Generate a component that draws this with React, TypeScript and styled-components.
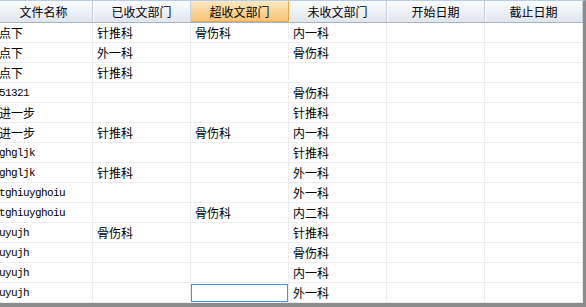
import { FC } from 'react';
import styled, { createGlobalStyle } from 'styled-components';

const columns = ['文件名称', '已收文部门', '超收文部门', '未收文部门', '开始日期', '截止日期'];

const rows: string[][] = [
  ['点下', '针推科', '骨伤科', '内一科', '', ''],
  ['点下', '外一科', '', '骨伤科', '', ''],
  ['点下', '针推科', '', '', '', ''],
  ['51321', '', '', '骨伤科', '', ''],
  ['进一步', '', '', '针推科', '', ''],
  ['进一步', '针推科', '骨伤科', '内一科', '', ''],
  ['ghgljk', '', '', '针推科', '', ''],
  ['ghgljk', '针推科', '', '外一科', '', ''],
  ['tghiuyghoiu', '', '', '外一科', '', ''],
  ['tghiuyghoiu', '', '骨伤科', '内二科', '', ''],
  ['uyujh', '骨伤科', '', '针推科', '', ''],
  ['uyujh', '', '', '骨伤科', '', ''],
  ['uyujh', '', '', '内一科', '', ''],
  ['uyujh', '', '', '外一科', '', ''],
];

const isLatin = (s: string) => /^[\x00-\x7f]+$/.test(s);

const App: FC = () => {
  return (
    <>
      <GlobalStyle />
      <Frame>
        <Scroller>
          <HeaderRow>
            {columns.map((c, i) => (
              <HeaderCell key={c} $active={i === 2}>
                {c}
              </HeaderCell>
            ))}
          </HeaderRow>
          {rows.map((r, ri) => (
            <Row key={ri}>
              {r.map((v, ci) => (
                <Cell key={ci} $latin={isLatin(v)}>
                  {ri === rows.length - 1 && ci === 2 ? <Editor /> : v}
                </Cell>
              ))}
            </Row>
          ))}
        </Scroller>
      </Frame>
    </>
  );
};

// Styles
const GlobalStyle = createGlobalStyle`
  html, body {
    margin: 0;
    padding: 0;
    background: #ffffff;
  }
  body {
    font-family: "Noto Sans CJK SC", "Liberation Sans", sans-serif;
    font-size: 12px;
  }
`;

const Frame = styled.div`
  width: 586px;
  height: 307px;
  box-sizing: border-box;
  overflow: hidden;
  background: #ffffff;
  border-top: 1px solid #b4cdee;
  border-right: 3px solid #8c8c8c;
  border-bottom: 4px solid #8c8c8c;
  box-shadow: inset -1px -1px 0 #d4d4d4;
`;

const Scroller = styled.div`
  margin-left: -5px;
  width: 588px;
  display: flex;
  flex-direction: column;
`;

const HeaderRow = styled.div`
  display: grid;
  grid-template-columns: repeat(6, 98px);
  height: 22px;
  box-sizing: border-box;
  border-bottom: 1px solid #a3b5cb;
`;

const HeaderCell = styled.div<{ $active?: boolean }>`
  display: flex;
  align-items: center;
  justify-content: center;
  box-sizing: border-box;
  color: #000;
  font-size: 12px;
  line-height: 1;
  background: ${(p) =>
    p.$active
      ? 'linear-gradient(to bottom, #fde9c2 0%, #f8d08e 60%, #f5c377 100%)'
      : 'linear-gradient(to bottom, #fbfcfd 0%, #eef1f6 50%, #dfe5ee 100%)'};
  border-right: 1px solid ${(p) => (p.$active ? '#eda546' : '#c2cedc')};
  box-shadow: ${(p) => (p.$active ? 'inset 0 -1px 0 #eda546' : 'inset 1px 0 0 #ffffff')};
`;

const Row = styled.div`
  display: grid;
  grid-template-columns: repeat(6, 98px);
  height: 20px;
`;

const Cell = styled.div<{ $latin?: boolean }>`
  position: relative;
  display: flex;
  align-items: center;
  box-sizing: border-box;
  padding-left: 4px;
  border-right: 1px solid #ededed;
  border-bottom: 1px solid #ededed;
  color: #000;
  white-space: nowrap;
  font-family: ${(p) =>
    p.$latin ? '"Liberation Mono", monospace' : '"Noto Sans CJK SC", sans-serif'};
  font-size: ${(p) => (p.$latin ? '11px' : '12px')};
  letter-spacing: ${(p) => (p.$latin ? '-0.6px' : '0')};
`;

const Editor = styled.div`
  position: absolute;
  left: 0;
  top: 1px;
  right: 0;
  bottom: 0;
  border: 1px solid #3e97f2;
  background: #fff;
`;

export default App;
